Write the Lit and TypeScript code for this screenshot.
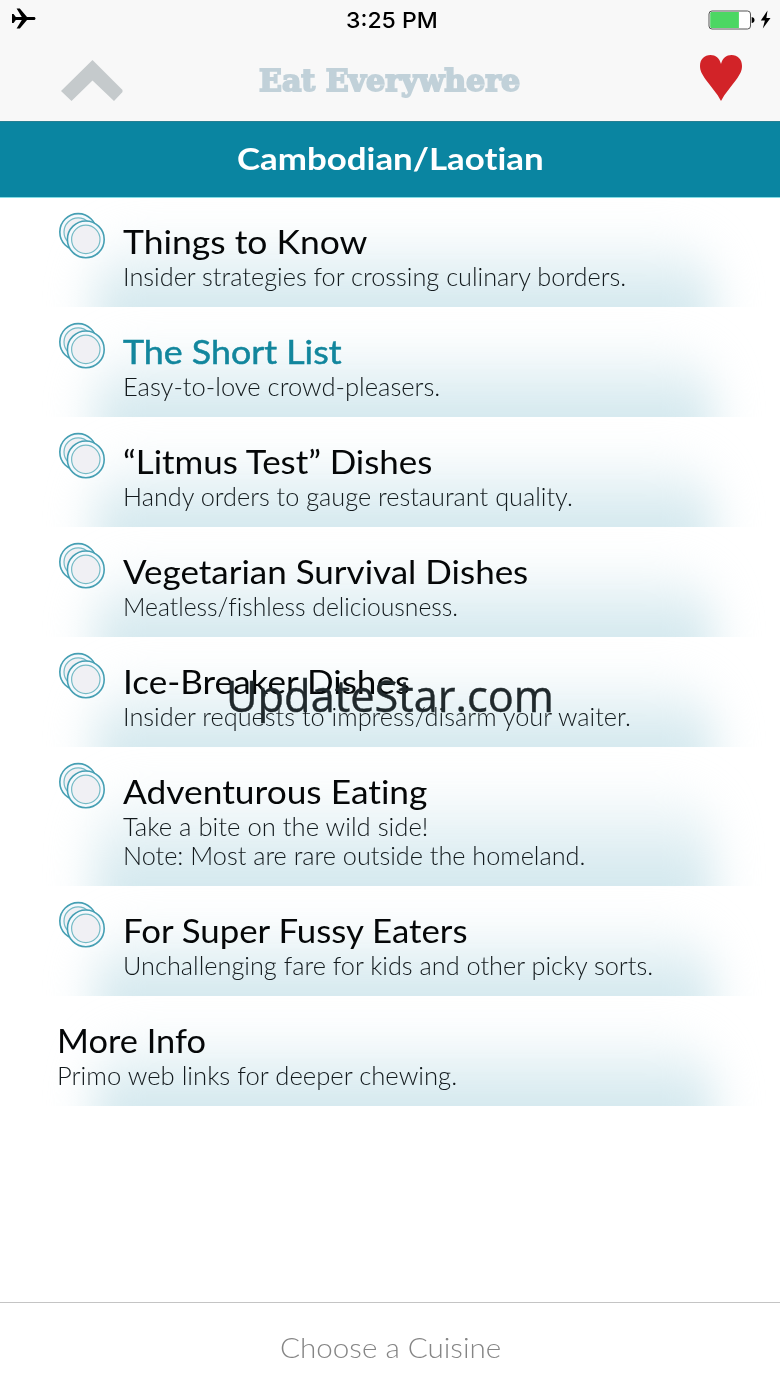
import {LitElement, html, css, svg, nothing} from 'lit';
import {customElement, property, query} from 'lit/decorators.js';

interface Line {
  text: string;
  width: number;
}

interface MenuEntry {
  title: Line;
  lines: Line[];
  active?: boolean;
  plain?: boolean;
}

const ENTRIES: MenuEntry[] = [
  {
    title: {text: 'Things to Know', width: 244},
    lines: [{text: 'Insider strategies for crossing culinary borders.', width: 503}],
  },
  {
    title: {text: 'The Short List', width: 219},
    lines: [{text: 'Easy-to-love crowd-pleasers.', width: 317}],
    active: true,
  },
  {
    title: {text: '“Litmus Test” Dishes', width: 309},
    lines: [{text: 'Handy orders to gauge restaurant quality.', width: 450}],
  },
  {
    title: {text: 'Vegetarian Survival Dishes', width: 405},
    lines: [{text: 'Meatless/fishless deliciousness.', width: 335}],
  },
  {
    title: {text: 'Ice-Breaker Dishes', width: 287},
    lines: [{text: 'Insider requests to impress/disarm your waiter.', width: 508}],
  },
  {
    title: {text: 'Adventurous Eating', width: 304},
    lines: [
      {text: 'Take a bite on the wild side!', width: 305},
      {text: 'Note: Most are rare outside the homeland.', width: 462},
    ],
  },
  {
    title: {text: 'For Super Fussy Eaters', width: 345},
    lines: [{text: 'Unchallenging fare for kids and other picky sorts.', width: 530}],
  },
  {
    title: {text: 'More Info', width: 149},
    lines: [{text: 'Primo web links for deeper chewing.', width: 400}],
    plain: true,
  },
];

/** A single line of text, stretched sideways to fill a given width. */
@customElement('fit-text')
export class FitText extends LitElement {
  @property() text = '';
  @property({type: Number}) width = 0;

  @query('span') private label!: HTMLSpanElement;

  override updated() {
    this.style.width = `${this.width}px`;
    this.label.style.transform = `scaleX(${this.width / this.label.offsetWidth})`;
  }

  override render() {
    return html`<span>${this.text}</span>`;
  }

  static override styles = css`
    :host {
      display: block;
      white-space: nowrap;
      font-variant-ligatures: none;
    }

    span {
      display: inline-block;
      transform-origin: left;
    }
  `;
}

@customElement('plate-stack')
export class PlateStack extends LitElement {
  private plate(cx: number, cy: number) {
    return svg`
      <circle cx=${cx} cy=${cy} r="18.4" fill="#f4f9fd" stroke="#459fb3" stroke-width="1.6" />
      <circle cx=${cx} cy=${cy} r="14.2" fill="#f0f0f4" stroke="#74bac5" stroke-width="1.2" />
    `;
  }

  override render() {
    return html`
      <svg width="50" height="48" viewBox="0 0 50 48">${this.plate(21.2, 20)} ${this.plate(28.8, 27.4)}</svg>
    `;
  }

  static override styles = css`
    :host,
    svg {
      display: block;
    }
  `;
}

@customElement('menu-row')
export class MenuRow extends LitElement {
  @property({attribute: false}) entry!: MenuEntry;

  override render() {
    const {title, lines, active, plain} = this.entry;
    return html`
      <div class="row">
        ${plain ? nothing : html`<plate-stack class="icon"></plate-stack>`}
        <div class="copy">
          <fit-text class="title ${active ? 'active' : ''}" .text=${title.text} .width=${title.width}></fit-text>
          ${lines.map((line) => html`<fit-text class="line" .text=${line.text} .width=${line.width}></fit-text>`)}
        </div>
      </div>
    `;
  }

  static override styles = css`
    :host {
      display: block;
    }

    .row {
      position: relative;
      display: flex;
      overflow: hidden;
      padding-left: 57px;
    }

    .row::before {
      content: '';
      position: absolute;
      inset: 30px 66px -60px 94px;
      background: linear-gradient(to bottom, rgb(211 232 238 / 0) 0, #d3e8ee calc(100% - 62px));
      border-radius: 60px 60px 0 0;
      filter: blur(22px);
    }

    .icon {
      position: relative;
      flex: none;
      width: 66px;
      padding-top: 15px;
    }

    .copy {
      position: relative;
      padding: 24px 0 16px;
    }

    .title {
      margin-bottom: 1px;
      font-size: 33px;
      line-height: 40px;
      color: #050708;
    }

    .title.active {
      color: #12869d;
      -webkit-text-stroke: 0.5px #12869d;
    }

    .line {
      font-size: 24.5px;
      font-weight: 300;
      line-height: 29px;
      color: #12191c;
    }
  `;
}

@customElement('app-root')
export class AppRoot extends LitElement {
  override render() {
    return html`
      <header>
        <div class="status">
          <svg class="plane" width="24" height="22" viewBox="0 0 24 22">
            <path
              d="M0 6h1.600L3.800 9h6L4.600 .5h3.200L15 9h6.800c1.100 0 1.700.7 1.700 1.500s-.6 1.500-1.700 1.500H15l-7.200 8.600H4.600L9.800 12h-6L1.600 15H0z"
            />
          </svg>
          <fit-text class="clock" .text=${'3:25 PM'} .width=${92}></fit-text>
          <svg class="battery" width="64" height="22" viewBox="0 0 64 22">
            <rect x="1" y="2" width="41.500" height="18" rx="3" fill="#fff" stroke="#555" />
            <path d="M2.200 4.300q0-1.200 1.200-1.200h27.500v15.800h-27.500q-1.200 0-1.200-1.200z" fill="#4cd763" />
            <path d="M43.700 8q2.800.5 2.800 3t-2.800 3z" />
            <path d="M59.500 1.500 52.800 11.500h4.100l-2.100 8L62.500 9h-4.100z" />
          </svg>
        </div>
        <div class="nav">
          <svg class="up" width="64" height="42" viewBox="0 0 64 42">
            <path d="M31.5 0 61.500 30v2L53 41 31.5 20.5 10.5 41 0 31z" fill="#c5cacc" />
          </svg>
          <fit-text class="brand" .text=${'Eat Everywhere'} .width=${261}></fit-text>
          <svg class="heart" width="42" height="48" viewBox="0 0 42 48">
            <path
              d="M21 47C17 39 11 33 6 26 2 20 0 17 0 12 0 5 4.500 1 10.500 1 15.500 1 19.500 4 21 10 22.500 4 26.500 1 31.500 1 37.500 1 42 5 42 12 42 17 40 20 36 26 31 33 25 39 21 47z"
              fill="#d22328"
            />
          </svg>
        </div>
      </header>
      <div class="heading">
        <fit-text .text=${'Cambodian/Laotian'} .width=${307}></fit-text>
      </div>
      <main>${ENTRIES.map((entry) => html`<menu-row .entry=${entry}></menu-row>`)}</main>
      <footer>
        <fit-text .text=${'Choose a Cuisine'} .width=${221}></fit-text>
      </footer>
      <fit-text class="watermark" .text=${'UpdateStar.com'} .width=${328}></fit-text>
    `;
  }

  static override styles = css`
    :host {
      position: relative;
      display: flex;
      flex-direction: column;
      height: 1387px;
      overflow: hidden;
      background: #fff;
      font-family: Lato, 'Open Sans', sans-serif;
    }

    header {
      box-sizing: border-box;
      height: 121px;
      background: #f8f8f8;
    }

    .status,
    .nav {
      display: grid;
      grid-template-columns: 1fr auto 1fr;
    }

    .status {
      height: 40px;
      padding: 0 8px 0 12px;
      align-items: center;
    }

    .plane {
      margin-bottom: 2px;
    }

    .clock {
      font: 500 22px/40px Inter, sans-serif;
      color: #000;
    }

    .battery,
    .heart {
      justify-self: end;
    }

    .nav {
      height: 81px;
      padding: 0 38px 0 61px;
      grid-template-columns: 198px 1fr 42px;
    }

    .up {
      margin-top: 20px;
    }

    .brand {
      font: 700 29px/83px 'DejaVu Serif', serif;
      color: #c1d1d9;
      -webkit-text-stroke: 1.8px #c1d1d9;
    }

    .heart {
      margin-top: 14px;
    }

    .heading {
      box-sizing: border-box;
      display: flex;
      justify-content: center;
      height: 77px;
      border-top: 1px solid #277f92;
      border-bottom: 1px solid #83dce4;
      background: #0a85a1;
      color: #fff;
      font-size: 31px;
      font-weight: 700;
      line-height: 73px;
    }

    main {
      flex: 1;
      margin-top: -1px;
    }

    footer {
      display: flex;
      justify-content: center;
      height: 84px;
      border-top: 1px solid #c4c4c4;
      color: #858585;
      font-size: 28px;
      font-weight: 300;
      line-height: 88px;
    }

    .watermark {
      position: absolute;
      top: 665px;
      left: 226px;
      font: 400 44px/60px 'Open Sans', 'Noto Sans', sans-serif;
      color: #20292c;
      -webkit-text-stroke: 0.4px #20292c;
    }
  `;
}
